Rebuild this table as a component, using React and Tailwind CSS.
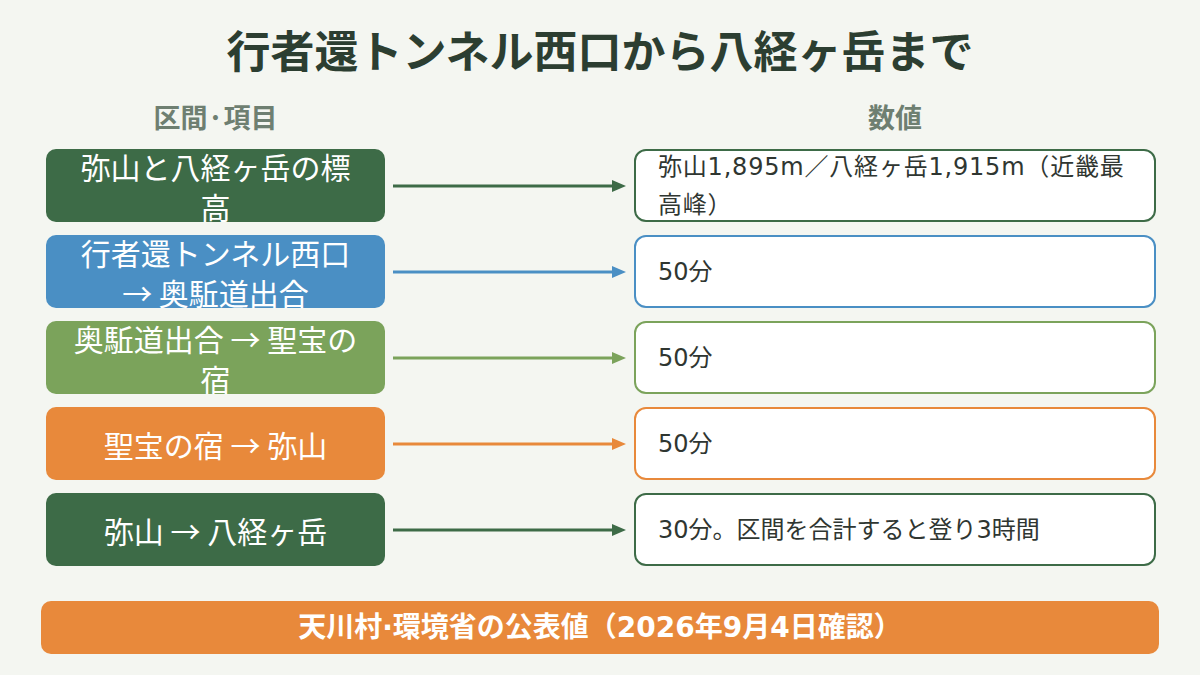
import React from "react";

const rows = [
  { label: "弥山と八経ヶ岳の標高", value: "弥山1,895m／八経ヶ岳1,915m（近畿最高峰）", wide: true, bg: "bg-[#3d6b47]", border: "border-[#3d6b47]", stroke: "#3d6b47" },
  { label: "行者還トンネル西口 → 奥駈道出合", value: "50分", bg: "bg-[#4a8fc4]", border: "border-[#4a8fc4]", stroke: "#4a8fc4" },
  { label: "奥駈道出合 → 聖宝の宿", value: "50分", bg: "bg-[#7ba35b]", border: "border-[#7ba35b]", stroke: "#7ba35b" },
  { label: "聖宝の宿 → 弥山", value: "50分", bg: "bg-[#e8893b]", border: "border-[#e8893b]", stroke: "#e8893b" },
  { label: "弥山 → 八経ヶ岳", value: "30分。区間を合計すると登り3時間", bg: "bg-[#3d6b47]", border: "border-[#3d6b47]", stroke: "#3d6b47" },
];

function Arrow({ color }) {
  return (
    <svg width="233" height="14" viewBox="0 0 233 14" className="block">
      <line x1="0" y1="7" x2="222" y2="7" stroke={color} strokeWidth="3" />
      <polygon points="219,1 233,7 219,13" fill={color} />
    </svg>
  );
}

const cjk = { fontFamily: '"Noto Sans CJK JP", "Noto Sans", sans-serif' };
const mixed = { fontFamily: '"DejaVu Sans", "Noto Sans CJK JP", sans-serif' };

export default function App() {
  return (
    <div className="w-[1200px] h-[675px] bg-[#f4f6f1] overflow-hidden flex flex-col" style={cjk}>
      <h1 className="mt-[21px] h-[56px] flex items-center justify-center text-[44px] font-bold text-[#2c3e31] leading-none">
        行者還トンネル西口から八経ヶ岳まで
      </h1>
      <div className="mt-[24px] flex pl-[46px]">
        <div className="w-[339px] text-center text-[27px] font-bold text-[#6e7f71] leading-[32px]">区間·項目</div>
        <div className="w-[249px]" />
        <div className="w-[522px] text-center text-[27px] font-bold text-[#6e7f71] leading-[32px]">数値</div>
      </div>
      <div className="mt-[16px] flex flex-col gap-[13px] pl-[46px]">
        {rows.map((r, i) => (
          <div key={i} className="flex items-center h-[73px]">
            <div className={`w-[339px] h-[73px] rounded-[10px] ${r.bg} flex items-center justify-center px-6 text-center text-white text-[30px] leading-[40px]`}>
              <span>{r.label}</span>
            </div>
            <div className="ml-[8px] mr-[8px]">
              <Arrow color={r.stroke} />
            </div>
            <div
              className={`w-[522px] h-[73px] rounded-[12px] bg-white border-[2.5px] ${r.border} flex items-center pl-[22px] pr-[17px] text-[24px] leading-[38px] text-[#2f3631]`}
              style={mixed}
            >
              <span className={r.wide ? "tracking-[0.8px]" : ""}>{r.value}</span>
            </div>
          </div>
        ))}
      </div>
      <div
        className="mt-[35px] mx-[41px] h-[53px] rounded-[10px] bg-[#e8893b] flex items-center justify-center text-white font-bold text-[28px]"
        style={mixed}
      >
        天川村·環境省の公表値（2026年9月4日確認）
      </div>
    </div>
  );
}
